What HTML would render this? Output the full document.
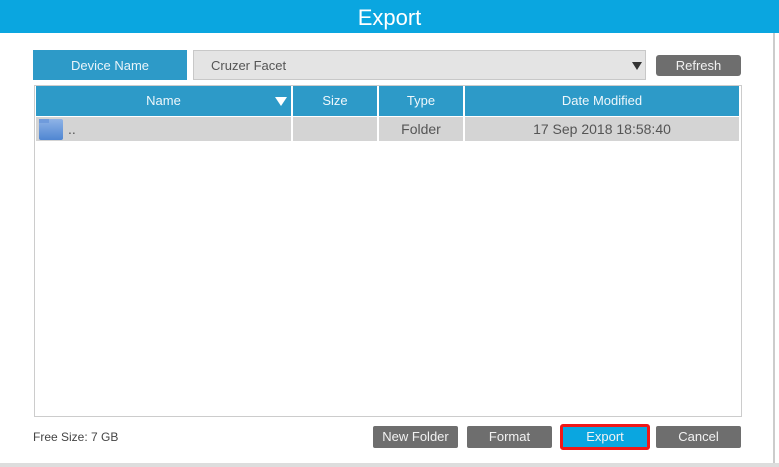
<!DOCTYPE html>
<html><head><style>
body{margin:0;width:779px;height:467px;overflow:hidden;background:#fff;font-family:"Liberation Sans",sans-serif;position:relative}
.a{position:absolute;box-sizing:border-box}
.hdr{left:0;top:0;width:779px;height:33px;background:#0aa6e0;color:#fff;font-size:22px;text-align:center;line-height:35px}
.th{top:86px;height:30px;background:#2d9ac8;color:#eef7fb;font-size:13px;text-align:center;line-height:30px}
.td{top:117px;height:24px;background:#d4d4d4;color:#555;font-size:14px;text-align:center;line-height:25px}
.btn{top:426px;height:22px;background:#6e6e6e;color:#f2f2f2;font-size:13px;text-align:center;line-height:22px;border-radius:2px}
</style></head><body>
<div class="a hdr">Export</div>
<div class="a" style="left:773px;top:33px;width:2px;height:430px;background:#ccc"></div>
<div class="a" style="left:0;top:463px;width:779px;height:4px;background:#ddd"></div>
<div class="a" style="left:33px;top:50px;width:154px;height:30px;background:#2d9ac8;color:#e8f4fa;font-size:13px;text-align:center;line-height:31px">Device Name</div>
<div class="a" style="left:193px;top:50px;width:453px;height:30px;background:#e4e4e4;border:1px solid #c8c8c8;color:#555;font-size:13px;line-height:29px;padding-left:17px">Cruzer Facet</div>
<div class="a" style="left:632px;top:62px;width:0;height:0;border-left:5px solid transparent;border-right:5px solid transparent;border-top:8px solid #333"></div>
<div class="a" style="left:656px;top:55px;width:85px;height:21px;background:#6e6e6e;color:#f2f2f2;font-size:13px;text-align:center;line-height:21px;border-radius:3px">Refresh</div>
<div class="a" style="left:34px;top:85px;width:708px;height:332px;border:1px solid #ccc"></div>
<div class="a th" style="left:36px;width:255px">Name</div>
<div class="a" style="left:275px;top:97px;width:0;height:0;border-left:6px solid transparent;border-right:6px solid transparent;border-top:9px solid #fff"></div>
<div class="a th" style="left:293px;width:84px">Size</div>
<div class="a th" style="left:379px;width:84px">Type</div>
<div class="a th" style="left:465px;width:274px">Date Modified</div>
<div class="a td" style="left:36px;width:255px;text-align:left;padding-left:32px">..</div>
<div class="a" style="left:39px;top:119px;width:24px;height:21px;background:linear-gradient(#8fb3e6,#4f86d2);border-radius:2px"></div>
<div class="a" style="left:39px;top:119px;width:10px;height:4px;background:#6f9bdc"></div>
<div class="a td" style="left:293px;width:84px"></div>
<div class="a td" style="left:379px;width:84px">Folder</div>
<div class="a td" style="left:465px;width:274px">17 Sep 2018 18:58:40</div>
<div class="a" style="left:33px;top:430px;color:#444;font-size:12px">Free Size: 7 GB</div>
<div class="a btn" style="left:373px;width:85px">New Folder</div>
<div class="a btn" style="left:467px;width:85px">Format</div>
<div class="a btn" style="left:560px;width:90px;height:26px;top:424px;background:#0aa6e0;border:3px solid #f01818;line-height:20px;border-radius:3px">Export</div>
<div class="a btn" style="left:656px;width:85px">Cancel</div>
</body></html>
